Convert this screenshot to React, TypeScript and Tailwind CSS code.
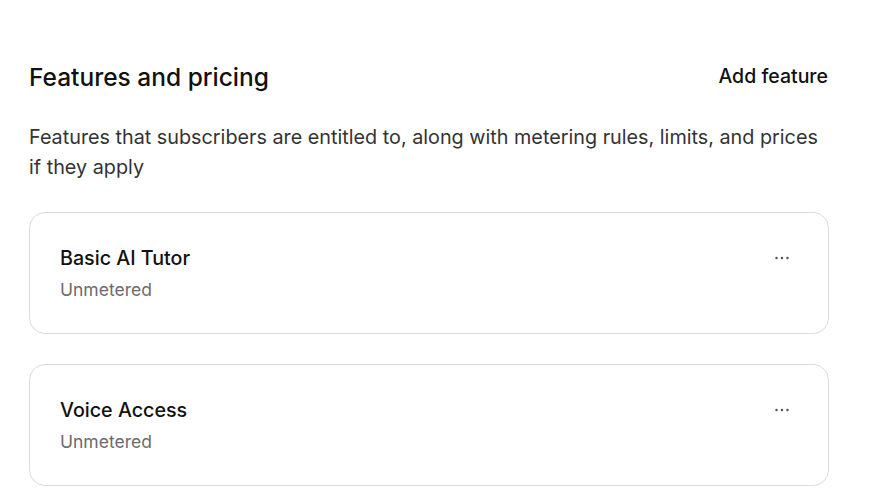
import React from "react";

function Dots() {
  return (
    <svg width="14" height="4" viewBox="0 0 14 4" className="block">
      <circle cx="1.5" cy="2" r="1.25" fill="#555555" />
      <circle cx="7" cy="2" r="1.25" fill="#555555" />
      <circle cx="12.5" cy="2" r="1.25" fill="#555555" />
    </svg>
  );
}

function FeatureCard({ title }: { title: string }) {
  return (
    <div className="flex items-start justify-between rounded-[16px] border border-[#dcdcdc] bg-white pl-[30px] pr-[39px] pt-[31px] pb-[29px]">
      <div className="flex flex-col">
        <div className="text-[19.7px] leading-[28px] font-medium text-[#111111]">{title}</div>
        <div className="mt-[4px] text-[17.5px] leading-[28px] text-[#6b6b6b]">Unmetered</div>
      </div>
      <div className="pt-[12px]">
        <Dots />
      </div>
    </div>
  );
}

export default function App() {
  return (
    <div
      className="min-h-screen bg-white"
      style={{ fontFamily: "Inter, 'Noto Sans', sans-serif" }}
    >
      <div className="w-[800px] ml-[29px] pt-[61px]">
        <div className="flex items-start justify-between">
          <h2 className="text-[24.5px] leading-[32px] font-medium text-[#111111]">Features and pricing</h2>
          <button className="mt-[1px] text-[19.5px] leading-[28px] font-medium text-[#111111] pr-[1px]">Add feature</button>
        </div>
        <p className="mt-[29px] text-[19.8px] leading-[30px] text-[#333333]">
          Features that subscribers are entitled to, along with metering rules, limits, and prices if they apply
        </p>
        <div className="mt-[30px] flex flex-col gap-[30px]">
          <FeatureCard title="Basic AI Tutor" />
          <FeatureCard title="Voice Access" />
        </div>
      </div>
    </div>
  );
}
